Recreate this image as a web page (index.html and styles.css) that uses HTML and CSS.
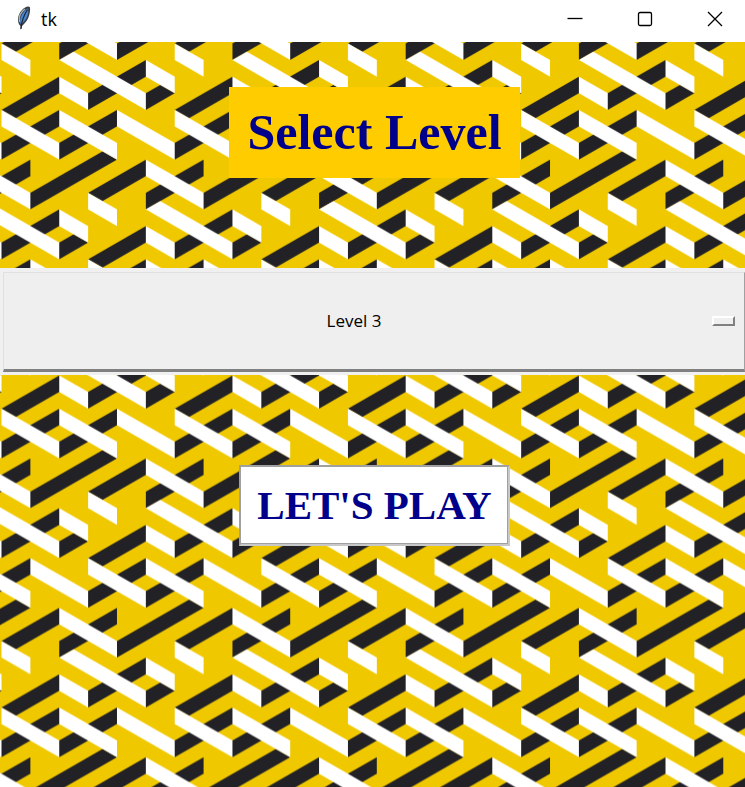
FILE: index.html
```html
<!DOCTYPE html>
<html lang="en">
<head>
<meta charset="utf-8">
<meta name="viewport" content="width=device-width, initial-scale=1">
<title>tk</title>
<link rel="stylesheet" href="styles.css">
</head>
<body>
<header class="titlebar">
  <svg class="feather" viewBox="0 0 16 26" aria-hidden="true">
    <path d="M4.500 25L4.500 21C1 18 1 10 6 5 9 1.500 13 .5 14 2.500 14.500 8 12.500 15 8 19L6 21z" fill="#3a3f45"/>
    <path d="M4.500 19C3 14 6 7 12 3 13 8 11 14 6.500 18z" fill="#4a86cf"/>
    <path d="M3.500 17C2.500 12 5 7 9 4" fill="none" stroke="#a9b4bd" stroke-width="1.200"/>
    <path d="M5 24C5.500 16 8 10 11.500 4.500" fill="none" stroke="#14283f" stroke-width="1.200"/>
  </svg>
  <h1 class="caption">tk</h1>
  <div class="controls">
    <button class="control" type="button" aria-label="Minimize"><svg viewBox="0 0 16 16"><path d="M.5 7.500h15"/></svg></button>
    <button class="control" type="button" aria-label="Maximize"><svg viewBox="0 0 16 16"><rect x="1.500" y="1.500" width="13" height="13" rx="1.500"/></svg></button>
    <button class="control" type="button" aria-label="Close"><svg viewBox="0 0 16 16"><path d="M1 1l14 14M15 1L1 15"/></svg></button>
  </div>
</header>
<main class="stage">
  <svg class="backdrop" aria-hidden="true">
    <defs>
      <g id="dark">
        <path d="M0 4L2 2V3L.5 4.500zM4 2V3L2 5V4zM4 4L6.500 1.500 7 2 4 5zM5 5V6L3 8V7zM5 7L5.500 6.500 6 7 5 8zM0 8L2 6V7L.5 8.500zM2 8V9L0 11V10zM4 8V9L2 11V10z"/>
      </g>
      <g id="light">
        <path d="M2 2L4 4V5L2 3zM0 4L1 5V6L0 5zM2 5L2.500 4.500 5 7V8zM5 5L6 6V7L5 6zM2 6L3 7V8L2 7zM0 8L2 10V11L0 9zM2 8L4 10V11L2 9zM4 8L6 10V11L4 9z"/>
      </g>
      <pattern id="weave" width="6" height="18" patternUnits="userSpaceOnUse" patternTransform="translate(1.500 -65) scale(28.870 16.600)">
        <g fill="#222126">
          <use href="#dark"/><use href="#dark" x="-6"/>
          <use href="#dark" x="3" y="9"/><use href="#dark" x="-3" y="9"/>
          <use href="#dark" x="3" y="-9"/><use href="#dark" x="-3" y="-9"/>
        </g>
        <g fill="#fff">
          <use href="#light"/><use href="#light" x="-6"/>
          <use href="#light" x="3" y="9"/><use href="#light" x="-3" y="9"/>
          <use href="#light" x="3" y="-9"/><use href="#light" x="-3" y="-9"/>
        </g>
      </pattern>
    </defs>
    <rect width="100%" height="100%" fill="url(#weave)"/>
  </svg>
  <label class="heading" for="level">Select Level</label>
  <div class="picker">
    <select class="level" id="level">
      <option>Level 1</option>
      <option>Level 2</option>
      <option selected>Level 3</option>
    </select>
    <span class="indicator"></span>
  </div>
  <button class="play" type="button">LET'S PLAY</button>
</main>
</body>
</html>
```
FILE: styles.css
```css
* {
  box-sizing: border-box;
}

body {
  margin: 0;
  min-height: 100vh;
  display: flex;
  flex-direction: column;
  background: #fff;
  color: #000;
}

.titlebar {
  display: flex;
  align-items: center;
  height: 42px;
  padding-left: 16px;
  background: #fff;
}

.feather {
  width: 16px;
  height: 26px;
  margin-bottom: 6px;
}

.caption {
  margin: 0 0 4px 9px;
  font: 400 18px/24px "Open Sans", sans-serif;
}

.controls {
  display: flex;
  margin-left: auto;
  margin-bottom: 5px;
}

.control {
  display: grid;
  place-items: center;
  width: 70px;
  height: 36px;
  padding: 0;
  border: 0;
  background: none;
}

.control:last-child {
  width: 65px;
  padding-left: 5px;
}

.control svg {
  width: 16px;
  height: 16px;
  fill: none;
  stroke: #000;
  stroke-width: 1.3px;
}

.stage {
  position: relative;
  flex: 1;
  display: flex;
  flex-direction: column;
  align-items: center;
  padding-top: 45px;
  background: #f0c800;
}

.backdrop {
  position: absolute;
  inset: 0;
  width: 100%;
  height: 100%;
}

.heading {
  position: relative;
  margin-left: 4px;
  padding: 18px;
  background: #fc0;
  color: #00008b;
  font: 700 50px/55px "Liberation Serif", serif;
}

.picker {
  position: relative;
  align-self: stretch;
  margin-top: 90px;
  padding: 4px 0 3px 3px;
  background: #f0f0f0;
}

.level {
  display: block;
  width: 100%;
  height: 100px;
  padding: 0 40px 0 0;
  appearance: none;
  border: solid;
  border-width: 1px 1px 3px;
  border-color: #e0e0e0 #a0a0a0 #808080 #e0e0e0;
  border-radius: 0;
  background: #efefef;
  color: #000;
  font: 400 17px/24px "Open Sans", sans-serif;
  text-align: center;
  text-align-last: center;
}

.indicator {
  position: absolute;
  right: 10px;
  top: 48px;
  width: 23px;
  height: 10px;
  border: 2px solid;
  border-color: #fff #808080 #808080 #fff;
  background: #efefef;
  pointer-events: none;
}

.play {
  position: relative;
  margin-top: 90px;
  margin-left: 4px;
  padding: 16px;
  border: 2px solid;
  border-color: #a0a0a0 #c8c8c8 #c8c8c8 #a0a0a0;
  background: #fff;
  box-shadow: inset -1px -1px #a0a0a0;
  color: #00008b;
  font: 700 41px/45px "Liberation Serif", serif;
}
```
